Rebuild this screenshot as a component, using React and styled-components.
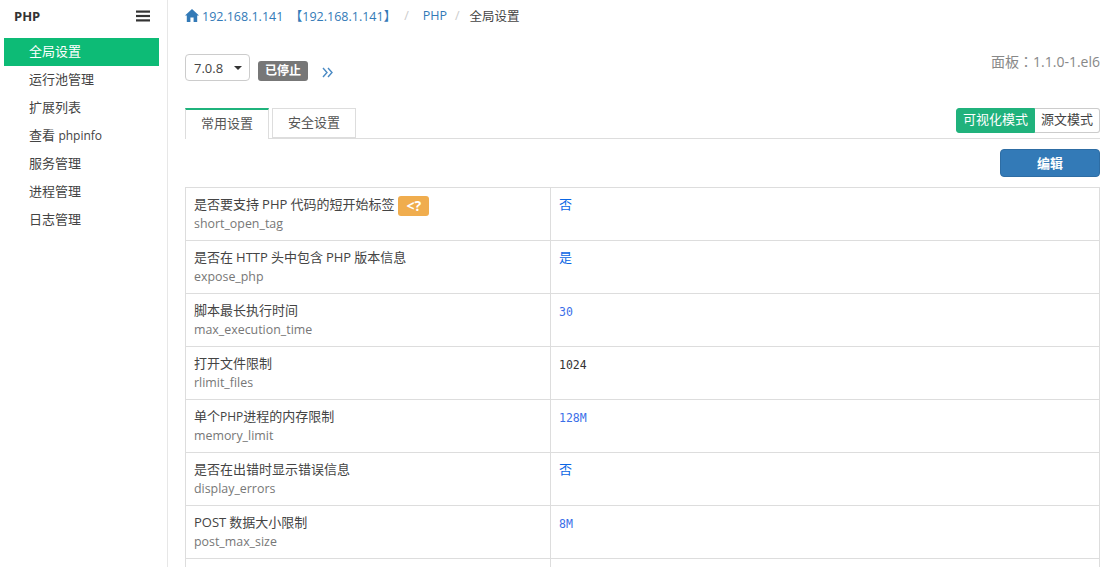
import React from 'react';
import styled, { createGlobalStyle } from 'styled-components';

const GlobalStyle = createGlobalStyle`
  html, body { margin: 0; padding: 0; background: #fff; }
  body {
    font-family: "Open Sans", "Noto Sans CJK SC", sans-serif;
    font-size: 13px;
    color: #333;
  }
  * { box-sizing: border-box; }
`;

const Page = styled.div`
  display: flex;
  width: 1106px;
  height: 567px;
  overflow: hidden;
`;

const Sidebar = styled.aside`
  flex: 0 0 168px;
  border-right: 1px solid #e7e7e7;
  padding: 0 8px 0 4px;
`;

const SideHead = styled.div`
  height: 38px;
  padding: 6px 9px 0 10px;
  display: flex;
  align-items: flex-start;
  justify-content: space-between;
`;

const Brand = styled.span`
  font-weight: 700;
  font-size: 13px;
  line-height: 20px;
  color: #333;
`;

const MenuIcon = styled.svg`
  width: 14px;
  height: 12px;
  margin-top: 4px;
  fill: #333;
`;

const MenuItem = styled.div`
  height: 28px;
  line-height: 27px;
  padding-left: 25px;
  font-size: 13px;
  color: ${p => (p.$active ? '#fff' : '#444')};
  background: ${p => (p.$active ? '#0dbb76' : 'transparent')};
`;

const Latin = styled.span`
  font-size: 12px;
`;

const Main = styled.main`
  flex: 1;
  padding: 0 6px 0 17px;
  min-width: 0;
`;

const Crumbs = styled.div`
  display: flex;
  align-items: center;
  height: 31px;
  font-size: 12.5px;
`;

const CrumbLink = styled.a`
  color: #337ab7;
  display: flex;
  align-items: center;
  gap: 3px;
  white-space: pre;
`;

const Sep = styled.span`
  color: #ccc;
  padding: 0 ${p => p.$right}px 0 ${p => p.$left}px;
`;

const CrumbNow = styled.span`
  color: #444;
`;

const Toolbar = styled.div`
  display: flex;
  align-items: flex-start;
  margin-top: 23px;
  height: 54px;
`;

const Select = styled.div`
  width: 65px;
  height: 27px;
  border: 1px solid #ccc;
  border-radius: 4px;
  display: flex;
  align-items: center;
  justify-content: space-between;
  padding: 0 7px 0 8px;
  font-size: 13px;
  color: #444;
`;

const Caret = styled.i`
  width: 0;
  height: 0;
  border-left: 4px solid transparent;
  border-right: 4px solid transparent;
  border-top: 4px solid #333;
`;

const Badge = styled.span`
  margin: 7px 0 0 8px;
  width: 50px;
  height: 20px;
  border-radius: 3px;
  background: #777;
  color: #fff;
  font-size: 12px;
  font-weight: 700;
  text-align: center;
  line-height: 19px;
`;

const More = styled.svg`
  margin: 13px 0 0 14px;
  width: 11px;
  height: 11px;
  fill: none;
  stroke: #4a8ac4;
  stroke-width: 1.4;
`;

const Version = styled.span`
  margin: -1px 0 0 auto;
  color: #888;
  font-family: "Open Sans", "Noto Sans CJK TC", sans-serif;
  font-size: 14px;
  line-height: 18px;
`;

const TabRow = styled.div`
  display: flex;
  justify-content: space-between;
  align-items: flex-start;
  height: 31px;
  border-bottom: 1px solid #ddd;
`;

const Tabs = styled.div`
  display: flex;
  gap: 3px;
`;

const Tab = styled.div`
  width: 84px;
  height: ${p => (p.$active ? '31px' : '30px')};
  text-align: center;
  line-height: 27px;
  font-size: 13px;
  color: #555;
  background: #fff;
  border: 1px solid #ddd;
  border-top: ${p => (p.$active ? '2px solid #1fb37c' : '1px solid #ddd')};
  border-bottom: ${p => (p.$active ? 'none' : '1px solid #ddd')};
`;

const Toggle = styled.div`
  display: flex;
  height: 25px;
`;

const ToggleBtn = styled.div`
  height: 25px;
  line-height: 21px;
  padding: 0 6px;
  font-size: 13px;
  color: ${p => (p.$on ? '#fff' : '#444')};
  background: ${p => (p.$on ? '#20b27c' : '#fff')};
  border: 1px solid ${p => (p.$on ? '#20b27c' : '#ccc')};
  border-radius: ${p => (p.$on ? '3px 0 0 3px' : '0 3px 3px 0')};
  border-left-width: ${p => (p.$on ? '1px' : '0')};
`;

const Actions = styled.div`
  display: flex;
  justify-content: flex-end;
  margin-top: 10px;
`;

const EditBtn = styled.button`
  width: 100px;
  height: 28px;
  border: 1px solid #2e6da4;
  border-radius: 4px;
  background: #337ab7;
  color: #fff;
  font: 700 13px "Open Sans", "Noto Sans CJK SC", sans-serif;
  padding: 0 0 2px;
`;

const Table = styled.div`
  margin-top: 10px;
  border: 1px solid #ddd;
  border-bottom: none;
`;

const Row = styled.div`
  display: flex;
  height: 53px;
  border-bottom: 1px solid #ddd;
`;

const KeyCell = styled.div`
  flex: 0 0 365px;
  border-right: 1px solid #ddd;
  padding: 6px 8px 0;
`;

const Label = styled.div`
  display: flex;
  align-items: center;
  gap: 4px;
  height: 18px;
  font-size: 13px;
  word-spacing: -0.3px;
  color: #444;
  white-space: pre;
`;

const Key = styled.div`
  font-size: 12.4px;
  line-height: 17px;
  margin-top: 3px;
  color: #777;
`;

const Tag = styled.span`
  width: 31px;
  height: 20px;
  margin-top: 6px;
  border-radius: 3px;
  background: #f0ad4e;
  color: #fff;
  font-weight: 700;
  font-size: 14px;
  text-align: center;
  line-height: 19px;
`;

const ValueCell = styled.div`
  flex: 1;
  padding: 9px 8px 0;
  font-family: "DejaVu Sans Mono", "Noto Sans CJK SC", monospace;
  font-size: 11.5px;
  line-height: 19px;
  color: ${p => (p.$plain ? '#333' : '#3b6fe8')};
`;

const BoolValue = styled.span`
  display: block;
  margin-top: -2px;
  font-size: 13px;
  color: #0a66e4;
`;

const menu = [
  '全局设置',
  '运行池管理',
  '扩展列表',
  <>查看 <Latin>phpinfo</Latin></>,
  '服务管理',
  '进程管理',
  '日志管理',
];

const rows = [
  { label: '是否要支持 PHP 代码的短开始标签', key: 'short_open_tag', bool: '否', tag: '<?' },
  { label: '是否在 HTTP 头中包含 PHP 版本信息', key: 'expose_php', bool: '是' },
  { label: '脚本最长执行时间', key: 'max_execution_time', value: '30' },
  { label: '打开文件限制', key: 'rlimit_files', value: '1024', plain: true },
  { label: <>单个<Latin>PHP</Latin>进程的内存限制</>, key: 'memory_limit', value: '128M' },
  { label: '是否在出错时显示错误信息', key: 'display_errors', bool: '否' },
  { label: 'POST 数据大小限制', key: 'post_max_size', value: '8M' },
  { label: '', key: '', value: '' },
];

const App = () => {
  return (
    <Page>
      <GlobalStyle />
      <Sidebar>
        <SideHead>
          <Brand>PHP</Brand>
          <MenuIcon viewBox="0 0 14 12">
            <rect y="0.5" width="14" height="2.2" />
            <rect y="4.9" width="14" height="2.2" />
            <rect y="9.3" width="14" height="2.2" />
          </MenuIcon>
        </SideHead>
        {menu.map((m, i) => (
          <MenuItem key={i} $active={i === 0}>{m}</MenuItem>
        ))}
      </Sidebar>
      <Main>
        <Crumbs>
          <CrumbLink>
            <svg width="14" height="13" viewBox="0 0 14 13" fill="#337ab7">
              <path d="M7 0 L14 6.6 L12.2 6.6 L12.2 13 L8.6 13 L8.6 8.6 L5.4 8.6 L5.4 13 L1.8 13 L1.8 6.6 L0 6.6 Z" />
            </svg>
            192.168.1.141  【192.168.1.141】
          </CrumbLink>
          <Sep $left={8} $right={14}>/</Sep>
          <CrumbLink>PHP</CrumbLink>
          <Sep $left={8} $right={10}>/</Sep>
          <CrumbNow>全局设置</CrumbNow>
        </Crumbs>
        <Toolbar>
          <Select>7.0.8<Caret /></Select>
          <Badge>已停止</Badge>
          <More viewBox="0 0 11 11">
            <path d="M1 1 L5 5.5 L1 10 M6 1 L10 5.5 L6 10" />
          </More>
          <Version>面板：1.1.0-1.el6</Version>
        </Toolbar>
        <TabRow>
          <Tabs>
            <Tab $active>常用设置</Tab>
            <Tab>安全设置</Tab>
          </Tabs>
          <Toggle>
            <ToggleBtn $on>可视化模式</ToggleBtn>
            <ToggleBtn>源文模式</ToggleBtn>
          </Toggle>
        </TabRow>
        <Actions>
          <EditBtn>编辑</EditBtn>
        </Actions>
        <Table>
          {rows.map((r, i) => (
            <Row key={i}>
              <KeyCell>
                <Label>
                  <span>{r.label}</span>
                  {r.tag && <Tag>{r.tag}</Tag>}
                </Label>
                <Key>{r.key}</Key>
              </KeyCell>
              <ValueCell $plain={r.plain}>
                {r.bool ? <BoolValue>{r.bool}</BoolValue> : r.value}
              </ValueCell>
            </Row>
          ))}
        </Table>
      </Main>
    </Page>
  );
};

export default App;
